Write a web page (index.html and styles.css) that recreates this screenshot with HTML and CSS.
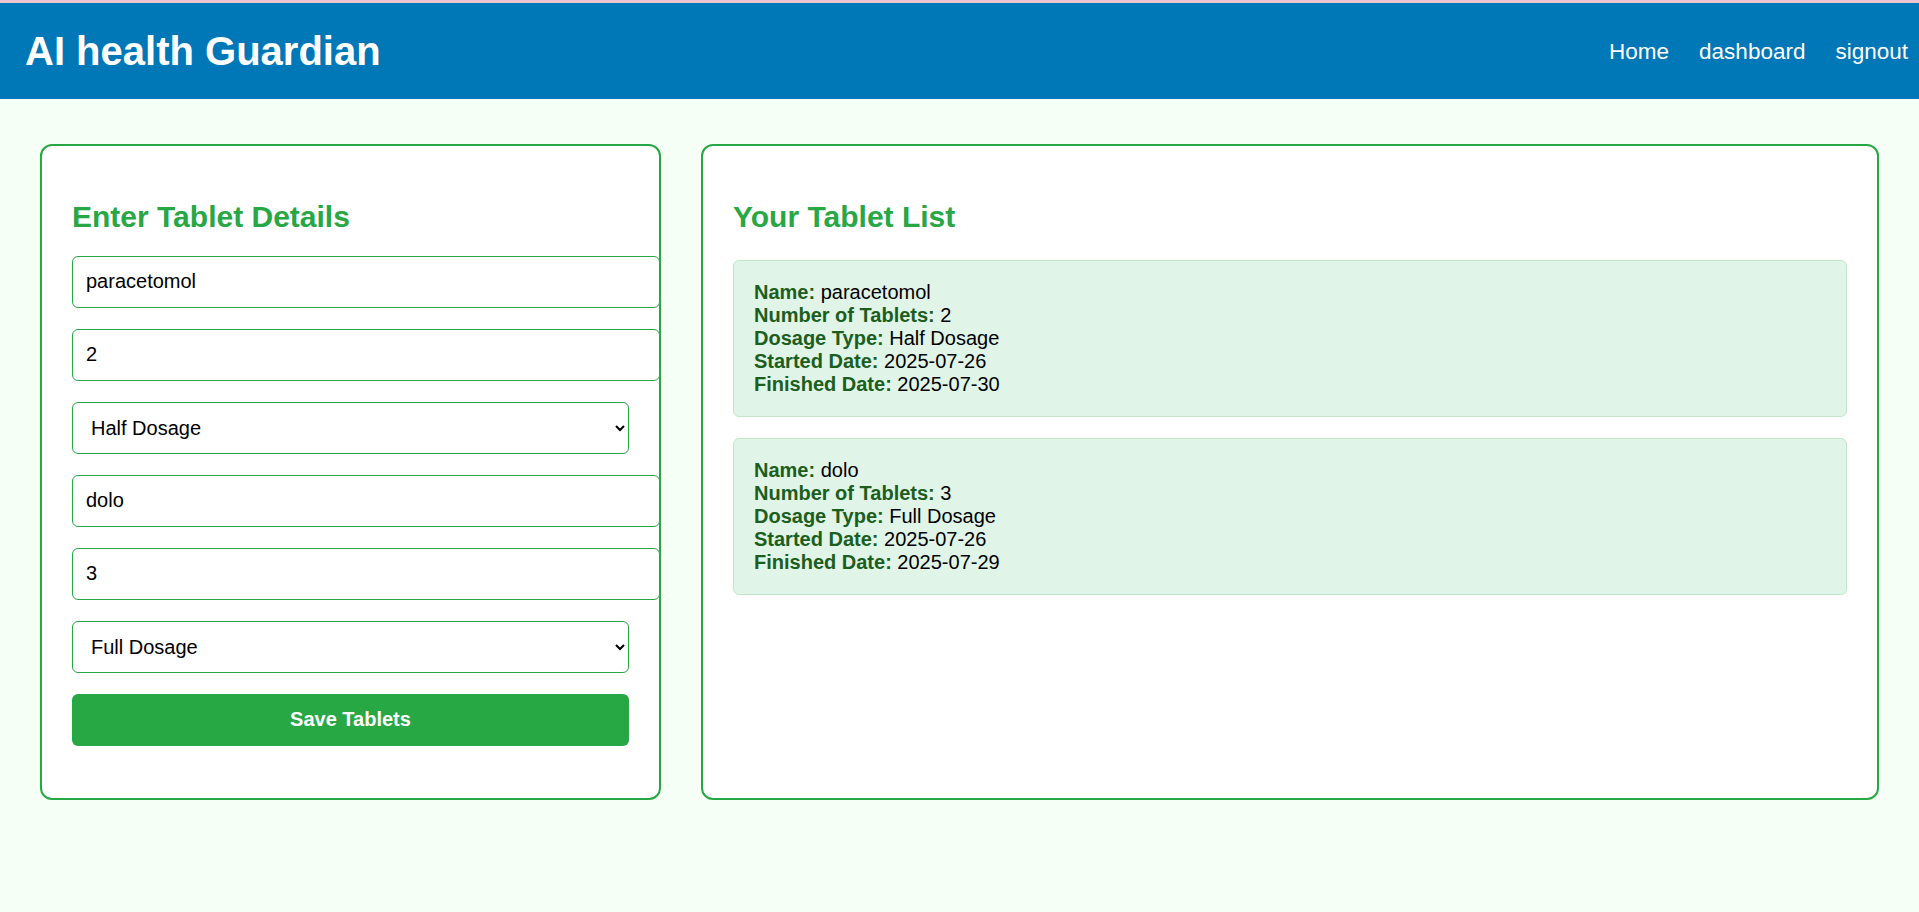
FILE: index.html
```html
<!DOCTYPE html>
<html lang="en">
<head>
<meta charset="utf-8">
<title>AI health Guardian</title>
<link rel="stylesheet" href="styles.css">
</head>
<body>
<div class="topline"></div>
<header class="header">
  <h1 class="brand">AI health Guardian</h1>
  <nav class="nav">
    <a href="#" class="nav-link">Home</a>
    <a href="#" class="nav-link">dashboard</a>
    <a href="#" class="nav-link">signout</a>
  </nav>
</header>
<main class="main">
  <section class="card form-card">
    <h2 class="card-title form-title">Enter Tablet Details</h2>
    <form class="form">
      <input class="field" type="text" value="paracetomol">
      <input class="field" type="text" value="2">
      <select class="field-select">
        <option>Full Dosage</option>
        <option selected>Half Dosage</option>
      </select>
      <input class="field" type="text" value="dolo">
      <input class="field" type="text" value="3">
      <select class="field-select">
        <option selected>Full Dosage</option>
        <option>Half Dosage</option>
      </select>
      <button type="button" class="save-btn">Save Tablets</button>
    </form>
  </section>
  <section class="card list-card">
    <h2 class="card-title list-title">Your Tablet List</h2>
    <div class="tablet">
      <div><strong class="label">Name:</strong> paracetomol</div>
      <div><strong class="label">Number of Tablets:</strong> 2</div>
      <div><strong class="label">Dosage Type:</strong> Half Dosage</div>
      <div><strong class="label">Started Date:</strong> 2025-07-26</div>
      <div><strong class="label">Finished Date:</strong> 2025-07-30</div>
    </div>
    <div class="tablet">
      <div><strong class="label">Name:</strong> dolo</div>
      <div><strong class="label">Number of Tablets:</strong> 3</div>
      <div><strong class="label">Dosage Type:</strong> Full Dosage</div>
      <div><strong class="label">Started Date:</strong> 2025-07-26</div>
      <div><strong class="label">Finished Date:</strong> 2025-07-29</div>
    </div>
  </section>
</main>
</body>
</html>
```

FILE: styles.css
```css
* {
  box-sizing: border-box;
}

html, body {
  margin: 0;
  padding: 0;
}

body {
  font-family: "Liberation Sans", Arial, sans-serif;
  font-size: 20px;
  line-height: 23px;
  color: #000;
  background: #f5fff5;
  min-height: 912px;
}

.topline {
  height: 3px;
  background: #efc6cf;
}

.header {
  height: 96px;
  background: #0077b6;
  display: flex;
  align-items: center;
  justify-content: space-between;
  padding: 0 11px 0 25px;
}

.brand {
  margin: 0;
  font-size: 40px;
  line-height: 46px;
  font-weight: bold;
  color: #fff;
}

.nav {
  display: flex;
  gap: 30px;
  align-items: center;
  padding-top: 2px;
}

.nav-link {
  color: #fff;
  text-decoration: none;
  font-size: 22.5px;
  line-height: 26px;
}

.main {
  display: flex;
  align-items: stretch;
  gap: 40px;
  padding: 45px 40px 40px 40px;
}

.card {
  box-sizing: content-box;
  background: #fff;
  border: 2px solid #28a745;
  border-radius: 12px;
  padding: 30px;
  min-width: 0;
}

.form-card {
  flex: 1 1 0;
}

.list-card {
  flex: 2 1 0;
}

.card-title {
  color: #28a745;
  font-size: 30px;
  line-height: 34.5px;
  font-weight: bold;
  margin: 24px 0 25px 0;
}

.form-title {
  margin-bottom: 21px;
}

.form {
  display: flex;
  flex-direction: column;
  align-items: flex-start;
  gap: 21px;
  margin: 0;
}

.field {
  display: block;
  width: calc(100% + 31px);
  height: 52px;
  padding: 0 13px;
  font-family: "Liberation Sans", Arial, sans-serif;
  font-size: 20px;
  color: #000;
  background: #fff;
  border: 1px solid #28a745;
  border-radius: 6px;
  outline: none;
}

.field-select {
  display: block;
  width: 100%;
  height: 52px;
  padding: 0 8px 0 14px;
  font-family: "Liberation Sans", Arial, sans-serif;
  font-size: 20px;
  color: #000;
  background: #fff;
  border: 1px solid #28a745;
  border-radius: 6px;
  outline: none;
}

.save-btn {
  display: block;
  width: 100%;
  height: 52px;
  margin-bottom: 22px;
  border: none;
  border-radius: 6px;
  background: #28a745;
  color: #fff;
  font-family: "Liberation Sans", Arial, sans-serif;
  font-size: 20px;
  font-weight: bold;
  cursor: pointer;
}

.tablet {
  background: #e0f4e8;
  border: 1px solid #c3e6cb;
  border-radius: 6px;
  padding: 20px;
  margin-bottom: 21px;
  font-size: 20px;
  line-height: 23px;
}

.label {
  color: #1b5e20;
  font-weight: bold;
}
```
